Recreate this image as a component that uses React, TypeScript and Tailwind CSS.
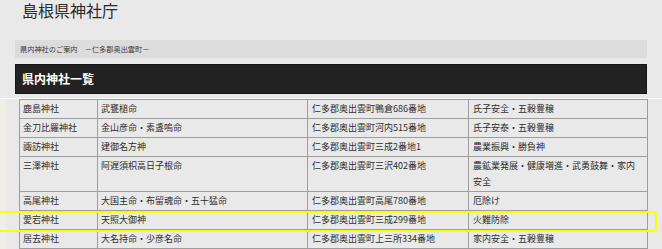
import React from 'react';

const shrines = [
  { name: '鹿島神社', deity: '武甕槌命', address: '仁多郡奥出雲町鴨倉686番地', benefit: '氏子安全・五穀豊穣' },
  { name: '金刀比羅神社', deity: '金山彦命・素盞嗚命', address: '仁多郡奥出雲町河内515番地', benefit: '氏子安泰・五穀豊穣' },
  { name: '諏訪神社', deity: '建御名方神', address: '仁多郡奥出雲町三成2番地1', benefit: '農業振興・勝負神' },
  { name: '三澤神社', deity: '阿遅須枳高日子根命', address: '仁多郡奥出雲町三沢402番地', benefit: '農鉱業発展・健康増進・武勇鼓舞・家内安全' },
  { name: '高尾神社', deity: '大国主命・布留魂命・五十猛命', address: '仁多郡奥出雲町高尾780番地', benefit: '厄除け' },
  { name: '愛宕神社', deity: '天照大御神', address: '仁多郡奥出雲町三成299番地', benefit: '火難防除' },
  { name: '居去神社', deity: '大名持命・少彦名命', address: '仁多郡奥出雲町上三所334番地', benefit: '家内安全・五穀豊穣' },
];

const App: React.FC = () => {
  return (
    <div className="relative w-[662px] h-[249px] overflow-hidden bg-[#e9e9e9] text-[#333] font-['Noto_Sans_CJK_JP',sans-serif]">
      <h1 className="pl-[22px] h-[40px] pt-px text-[16px] leading-[19px] font-normal text-[#2a2a2a]">島根県神社庁</h1>

      <div className="ml-[15px] w-[632px] h-[18px] bg-[#dcdcdc] pl-[5px] flex items-center text-[7.2px] text-[#3a3a3a]">
        県内神社のご案内　－仁多郡奥出雲町－
      </div>

      <div className="mt-[6px] ml-[15px] w-[632px] h-[30px] bg-[#222] border border-[#141414] pl-[6px] flex items-center text-white font-bold text-[12px]">
        県内神社一覧
      </div>

      <div className="mt-[4px] h-px bg-white" />

      {/* table */}
      <div className="flex">
        <div className="w-[6px] shrink-0 bg-[#efedea]" />
        <table className="ml-[13px] w-[628px] table-fixed border-collapse text-[9px] leading-[16px] text-[#2e2e2e]">
          <colgroup>
            <col className="w-[78px]" />
            <col className="w-[210px]" />
            <col className="w-[161px]" />
            <col className="w-[179px]" />
          </colgroup>
          <tbody>
            {shrines.map((s) => (
              <tr key={s.name}>
                <td className="border border-[#9d9d9d] px-[3px] py-px align-top">{s.name}</td>
                <td className="border border-[#9d9d9d] px-[3px] py-px align-top">{s.deity}</td>
                <td className="border border-[#9d9d9d] px-[4px] py-px align-top">{s.address}</td>
                <td className="border border-[#9d9d9d] px-[4px] py-px align-top">{s.benefit}</td>
              </tr>
            ))}
          </tbody>
        </table>
      </div>

      {/* highlight around the 愛宕神社 row */}
      <div className="absolute left-[-4px] top-[211px] w-[661px] h-[21px] border-2 border-[#ffff00] rounded-[4px] pointer-events-none" />
    </div>
  );
};

export default App;
